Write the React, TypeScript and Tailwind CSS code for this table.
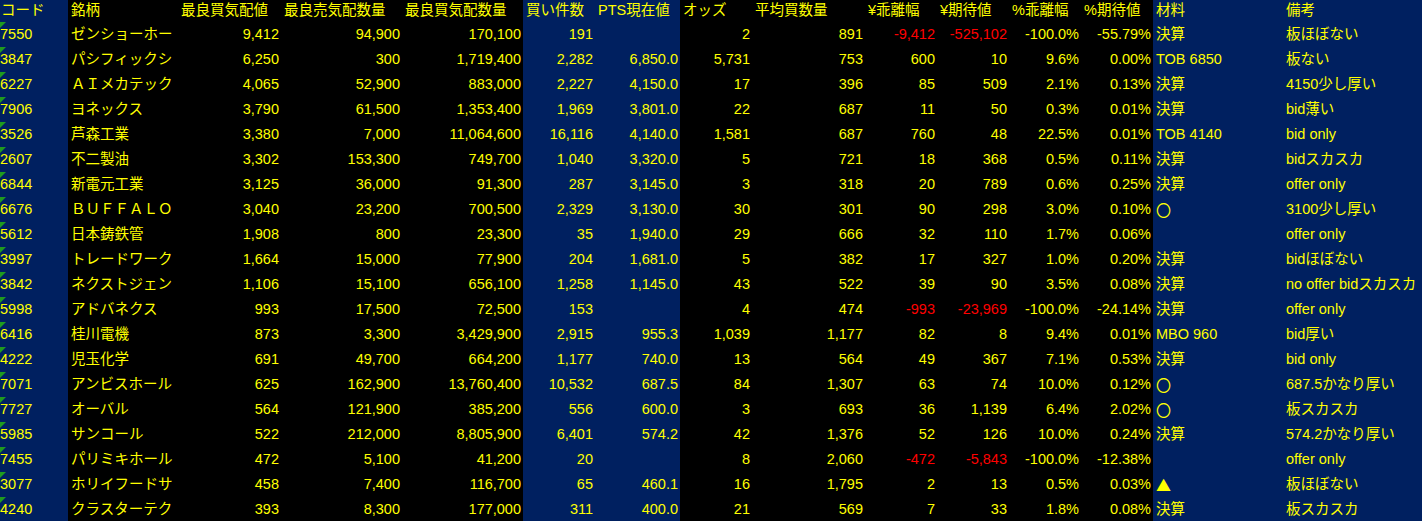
import React from "react";

type Row = {
  code: string;
  name: string;
  c: string; d: string; e: string; f: string; g: string; h: string; i: string;
  j: string; k: string; l: string; m: string; n: string; o: string;
};

const rows: Row[] = [
  { code: "7550", name: "ゼンショーホー", c: "9,412", d: "94,900", e: "170,100", f: "191", g: "", h: "2", i: "891", j: "-9,412", k: "-525,102", l: "-100.0%", m: "-55.79%", n: "決算", o: "板ほぼない" },
  { code: "3847", name: "パシフィックシ", c: "6,250", d: "300", e: "1,719,400", f: "2,282", g: "6,850.0", h: "5,731", i: "753", j: "600", k: "10", l: "9.6%", m: "0.00%", n: "TOB 6850", o: "板ない" },
  { code: "6227", name: "ＡＩメカテック", c: "4,065", d: "52,900", e: "883,000", f: "2,227", g: "4,150.0", h: "17", i: "396", j: "85", k: "509", l: "2.1%", m: "0.13%", n: "決算", o: "4150少し厚い" },
  { code: "7906", name: "ヨネックス", c: "3,790", d: "61,500", e: "1,353,400", f: "1,969", g: "3,801.0", h: "22", i: "687", j: "11", k: "50", l: "0.3%", m: "0.01%", n: "決算", o: "bid薄い" },
  { code: "3526", name: "芦森工業", c: "3,380", d: "7,000", e: "11,064,600", f: "16,116", g: "4,140.0", h: "1,581", i: "687", j: "760", k: "48", l: "22.5%", m: "0.01%", n: "TOB 4140", o: "bid only" },
  { code: "2607", name: "不二製油", c: "3,302", d: "153,300", e: "749,700", f: "1,040", g: "3,320.0", h: "5", i: "721", j: "18", k: "368", l: "0.5%", m: "0.11%", n: "決算", o: "bidスカスカ" },
  { code: "6844", name: "新電元工業", c: "3,125", d: "36,000", e: "91,300", f: "287", g: "3,145.0", h: "3", i: "318", j: "20", k: "789", l: "0.6%", m: "0.25%", n: "決算", o: "offer only" },
  { code: "6676", name: "ＢＵＦＦＡＬＯ", c: "3,040", d: "23,200", e: "700,500", f: "2,329", g: "3,130.0", h: "30", i: "301", j: "90", k: "298", l: "3.0%", m: "0.10%", n: "○", o: "3100少し厚い" },
  { code: "5612", name: "日本鋳鉄管", c: "1,908", d: "800", e: "23,300", f: "35", g: "1,940.0", h: "29", i: "666", j: "32", k: "110", l: "1.7%", m: "0.06%", n: "", o: "offer only" },
  { code: "3997", name: "トレードワーク", c: "1,664", d: "15,000", e: "77,900", f: "204", g: "1,681.0", h: "5", i: "382", j: "17", k: "327", l: "1.0%", m: "0.20%", n: "決算", o: "bidほぼない" },
  { code: "3842", name: "ネクストジェン", c: "1,106", d: "15,100", e: "656,100", f: "1,258", g: "1,145.0", h: "43", i: "522", j: "39", k: "90", l: "3.5%", m: "0.08%", n: "決算", o: "no offer bidスカスカ" },
  { code: "5998", name: "アドバネクス", c: "993", d: "17,500", e: "72,500", f: "153", g: "", h: "4", i: "474", j: "-993", k: "-23,969", l: "-100.0%", m: "-24.14%", n: "決算", o: "offer only" },
  { code: "6416", name: "桂川電機", c: "873", d: "3,300", e: "3,429,900", f: "2,915", g: "955.3", h: "1,039", i: "1,177", j: "82", k: "8", l: "9.4%", m: "0.01%", n: "MBO 960", o: "bid厚い" },
  { code: "4222", name: "児玉化学", c: "691", d: "49,700", e: "664,200", f: "1,177", g: "740.0", h: "13", i: "564", j: "49", k: "367", l: "7.1%", m: "0.53%", n: "決算", o: "bid only" },
  { code: "7071", name: "アンビスホール", c: "625", d: "162,900", e: "13,760,400", f: "10,532", g: "687.5", h: "84", i: "1,307", j: "63", k: "74", l: "10.0%", m: "0.12%", n: "○", o: "687.5かなり厚い" },
  { code: "7727", name: "オーバル", c: "564", d: "121,900", e: "385,200", f: "556", g: "600.0", h: "3", i: "693", j: "36", k: "1,139", l: "6.4%", m: "2.02%", n: "○", o: "板スカスカ" },
  { code: "5985", name: "サンコール", c: "522", d: "212,000", e: "8,805,900", f: "6,401", g: "574.2", h: "42", i: "1,376", j: "52", k: "126", l: "10.0%", m: "0.24%", n: "決算", o: "574.2かなり厚い" },
  { code: "7455", name: "パリミキホール", c: "472", d: "5,100", e: "41,200", f: "20", g: "", h: "8", i: "2,060", j: "-472", k: "-5,843", l: "-100.0%", m: "-12.38%", n: "", o: "offer only" },
  { code: "3077", name: "ホリイフードサ", c: "458", d: "7,400", e: "116,700", f: "65", g: "460.1", h: "16", i: "1,795", j: "2", k: "13", l: "0.5%", m: "0.03%", n: "▲", o: "板ほぼない" },
  { code: "4240", name: "クラスターテク", c: "393", d: "8,300", e: "177,000", f: "311", g: "400.0", h: "21", i: "569", j: "7", k: "33", l: "1.8%", m: "0.08%", n: "決算", o: "板スカスカ" },
];

const headers = [
  "コード", "銘柄", "最良買気配値", "最良売気配数量", "最良買気配数量", "買い件数", "PTS現在値",
  "オッズ", "平均買数量", "¥乖離幅", "¥期待値", "%乖離幅", "%期待値", "材料", "備考",
];

const BLUE = "bg-[#002060]";
const BLACK = "bg-black";
const colBg = [BLUE, BLACK, BLACK, BLACK, BLACK, BLUE, BLUE, BLACK, BLACK, BLACK, BLACK, BLACK, BLACK, BLUE, BLUE];

function Cell({
  idx,
  children,
  right,
  red,
  h,
  extra,
}: {
  idx: number;
  children?: React.ReactNode;
  right?: boolean;
  red?: boolean;
  h: string;
  extra?: string;
}) {
  return (
    <div
      className={`${colBg[idx]} ${h} relative flex items-center overflow-hidden whitespace-nowrap ${
        right ? "justify-end pr-[2px]" : "justify-start pl-[3px]"
      } ${red ? "text-[#ff0000]" : "text-[#ffff00]"} ${extra ?? ""}`}
    >
      {children}
    </div>
  );
}

function Tri() {
  return (
    <svg className="absolute left-0 top-[1px]" width="6" height="6" viewBox="0 0 6 6">
      <polygon points="0,0 6,0 0,6" fill="#1f9b1f" />
    </svg>
  );
}

function Mark({ v }: { v: string }) {
  if (v === "○" || v === "▲") {
    return (
      <span
        className="text-[15px]"
        style={{ fontFamily: '"Noto Sans CJK JP", sans-serif' }}
      >
        {v === "○" ? "〇" : "▲"}
      </span>
    );
  }
  return <>{v}</>;
}

export default function App() {
  return (
    <div
      className="w-[1422px] h-[521px] overflow-hidden bg-black text-[14.5px] leading-none"
      style={{ fontFamily: '"Liberation Sans", "Noto Sans CJK JP", sans-serif' }}
    >
      <div className="grid w-[1560px] grid-cols-[68px_110px_103px_121px_121px_72px_85px_72px_113px_72px_72px_72px_72px_130px_277px]">
        {headers.map((t, i) => (
          <Cell key={t} idx={i} h="h-[21px]" extra={i === 0 ? "!pl-[1px]" : ""}>
            {t}
          </Cell>
        ))}
        {rows.map((r) => {
          const nums = [r.c, r.d, r.e, r.f, r.g, r.h, r.i, r.j, r.k, r.l, r.m];
          return (
            <React.Fragment key={r.code}>
              <Cell idx={0} h="h-[25px]" extra="!pl-0 pt-[1px]">
                <Tri />
                {r.code}
              </Cell>
              <Cell idx={1} h="h-[25px]" extra="pt-[1px]">
                {r.name}
              </Cell>
              {nums.map((v, k) => (
                <Cell
                  key={k}
                  idx={k + 2}
                  h="h-[25px]"
                  right
                  extra="pt-[1px]"
                  red={(k === 7 || k === 8) && v.startsWith("-")}
                >
                  {v}
                </Cell>
              ))}
              <Cell idx={13} h="h-[25px]" extra="pt-[1px]">
                <Mark v={r.n} />
              </Cell>
              <Cell idx={14} h="h-[25px]" extra="pt-[1px]">
                {r.o}
              </Cell>
            </React.Fragment>
          );
        })}
      </div>
    </div>
  );
}
